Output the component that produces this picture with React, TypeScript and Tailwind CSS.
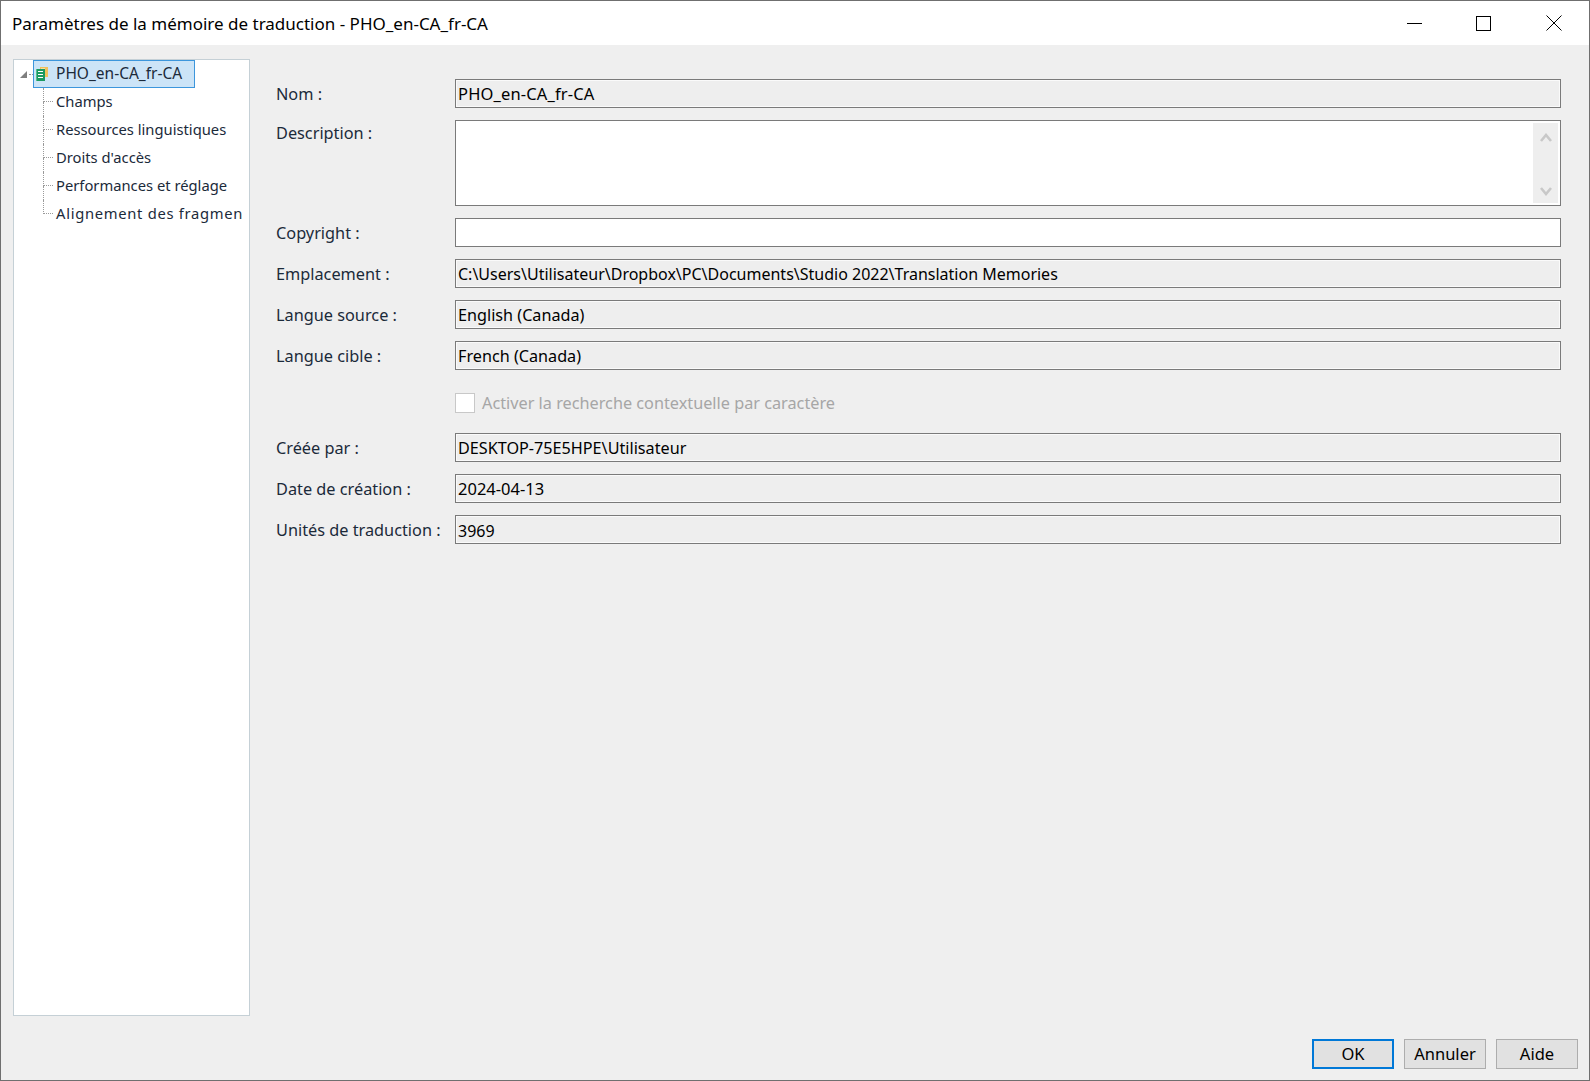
const fields = [
  { label: 'Emplacement :', value: 'C:\\Users\\Utilisateur\\Dropbox\\PC\\Documents\\Studio 2022\\Translation Memories', valueClass: 'text-[16px] pb-[1px]' },
  { label: 'Langue source :', value: 'English (Canada)', valueClass: 'text-[16.2px]' },
  { label: 'Langue cible :', value: 'French (Canada)', valueClass: 'text-[16.2px]' },
];

const infoFields = [
  { label: 'Créée par :', value: 'DESKTOP-75E5HPE\\Utilisateur', valueClass: 'text-[16.2px]' },
  { label: 'Date de création :', value: '2024-04-13', valueClass: '' },
  { label: 'Unités de traduction :', value: '3969', valueClass: 'text-[16px]' },
];

const treeItems = ['Champs', 'Ressources linguistiques', "Droits d'accès", 'Performances et réglage', 'Alignement des fragmen'];

function Row({ label, value, className = '', valueClass = '' }: { label: string; value: string; className?: string; valueClass?: string }) {
  return (
    <div className={`flex h-[29px] items-center ${className}`}>
      <div className="w-[179px] shrink-0 pt-[2px] text-[16.3px] text-[#1b2a3a]">{label}</div>
      <div className={`flex h-full flex-1 items-center border border-[#7a7a7a] bg-[#eeeeee] pl-[2px] pt-[2px] text-black shadow-[inset_0_0_0_1px_#fafafa] ${valueClass}`}>
        {value}
      </div>
    </div>
  );
}

function TmIcon() {
  return (
    <svg width="13" height="14" viewBox="0 0 13 14" className="shrink-0">
      <rect x="4" y="0" width="8" height="10" fill="#f0c15c" />
      <rect x="5" y="1" width="4" height="1" fill="#f8dfa0" />
      <rect x="0" y="2" width="9" height="12" fill="#1a9a62" />
      <rect x="0" y="2" width="1" height="12" fill="#56bd90" />
      <rect x="2" y="4" width="5" height="1" fill="#ffffff" />
      <rect x="2" y="7" width="5" height="1" fill="#ffffff" />
      <rect x="2" y="10" width="5" height="1" fill="#ffffff" />
    </svg>
  );
}

function Button({ children, primary }: { children: string; primary?: boolean }) {
  return (
    <div
      className={`flex h-[30px] w-[82px] items-center justify-center bg-[#e1e1e1] text-black ${
        primary ? 'border-2 border-[#0078d7]' : 'border border-[#adadad]'
      }`}
    >
      {children}
    </div>
  );
}

export default function App() {
  return (
    <div className="flex h-[1081px] w-[1590px] flex-col overflow-hidden border border-[#6f6f6f] bg-[#efefef] font-['Noto_Sans',sans-serif] text-[16.5px] leading-none">
      <div className="flex h-[44px] shrink-0 items-center justify-between bg-white">
        <div className="pl-[11px] text-[17px] text-black">Paramètres de la mémoire de traduction - PHO_en-CA_fr-CA</div>
        <div className="flex h-full">
          <div className="flex w-[70px] items-center justify-center">
            <svg width="15" height="15" viewBox="0 0 15 15"><path d="M0 7.5H15" stroke="#000" strokeWidth="1" /></svg>
          </div>
          <div className="mr-[2px] flex w-[68px] items-center justify-center">
            <svg width="15" height="15" viewBox="0 0 15 15"><rect x="0.5" y="0.5" width="14" height="14" fill="none" stroke="#000" /></svg>
          </div>
          <div className="flex w-[70px] items-center justify-center">
            <svg width="16" height="16" viewBox="0 0 16 16"><path d="M0.5 0.5L15.5 15.5M15.5 0.5L0.5 15.5" stroke="#000" strokeWidth="1" fill="none" /></svg>
          </div>
        </div>
      </div>

      <div className="flex flex-1 pl-[12px] pt-[14px]">
        <div className="h-[957px] w-[237px] shrink-0 overflow-hidden border border-[#c5d0d6] bg-white text-[14.75px] text-[#1b2a3a]">
          <div className="flex h-[28px] items-center">
            <svg width="7" height="7" viewBox="0 0 7 7" className="ml-[6px]"><path d="M7 0V7H0Z" fill="#7f7f7f" /></svg>
            <div className="ml-[2px] w-[4px] border-t border-dotted border-[#9a9a9a]" />
            <div className="flex h-full w-[162px] items-center gap-[7px] border border-[#3c96dc] bg-[#cce4f7] pl-[2px] text-[15.5px]">
              <TmIcon />
              <span className="pb-[1px]">PHO_en-CA_fr-CA</span>
            </div>
          </div>
          {treeItems.map((item, i) => (
            <div key={item} className="ml-[29px] flex h-[28px] items-stretch whitespace-nowrap">
              <div className="flex w-[13px] shrink-0 flex-col">
                <div className="h-[14px] w-[10px] border-b border-l border-dotted border-[#9a9a9a]" />
                {i < treeItems.length - 1 && <div className="flex-1 border-l border-dotted border-[#9a9a9a]" />}
              </div>
              <div className={`flex items-center pb-[2px] ${i === 4 ? 'tracking-[0.7px]' : ''}`}>{item}</div>
            </div>
          ))}
        </div>

        <div className="flex-1 pl-[26px] pr-[28px] pt-[20px]">
          <Row label="Nom :" value="PHO_en-CA_fr-CA" valueClass="tracking-[0.15px]" />
          <div className="mt-[12px] flex h-[86px]">
            <div className="w-[179px] shrink-0 pt-[5px] text-[16.3px] text-[#1b2a3a]">Description :</div>
            <div className="flex flex-1 justify-end border border-[#7a7a7a] bg-white p-[2px]">
              <div className="flex w-[25px] flex-col items-center justify-between bg-[#eeeeee] pb-[7px] pt-[10px]">
                <svg width="12" height="9" viewBox="0 0 12 9"><path d="M1 8L6 2L11 8" fill="none" stroke="#c8c8c8" strokeWidth="2.6" /></svg>
                <svg width="12" height="9" viewBox="0 0 12 9"><path d="M1 1L6 7L11 1" fill="none" stroke="#c8c8c8" strokeWidth="2.6" /></svg>
              </div>
            </div>
          </div>
          <div className="mt-[12px] flex h-[29px] items-center">
            <div className="w-[179px] shrink-0 pt-[2px] text-[16.3px] text-[#1b2a3a]">Copyright :</div>
            <div className="h-full flex-1 border border-[#7a7a7a] bg-white" />
          </div>
          {fields.map((f) => (
            <Row key={f.label} label={f.label} value={f.value} valueClass={f.valueClass} className="mt-[12px]" />
          ))}
          <div className="mt-[23px] flex h-[20px] items-center pl-[179px]">
            <div className="h-[20px] w-[20px] border border-[#c8c8c8] bg-white" />
            <span className="ml-[7px] text-[16.25px] text-[#a6a6a6]">Activer la recherche contextuelle par caractère</span>
          </div>
          <Row label={infoFields[0].label} value={infoFields[0].value} valueClass={infoFields[0].valueClass} className="mt-[20px]" />
          {infoFields.slice(1).map((f) => (
            <Row key={f.label} label={f.label} value={f.value} valueClass={f.valueClass} className="mt-[12px]" />
          ))}
        </div>
      </div>

      <div className="flex shrink-0 justify-end gap-[10px] pb-[11px] pr-[11px]">
        <Button primary>OK</Button>
        <Button>Annuler</Button>
        <Button>Aide</Button>
      </div>
    </div>
  );
}
